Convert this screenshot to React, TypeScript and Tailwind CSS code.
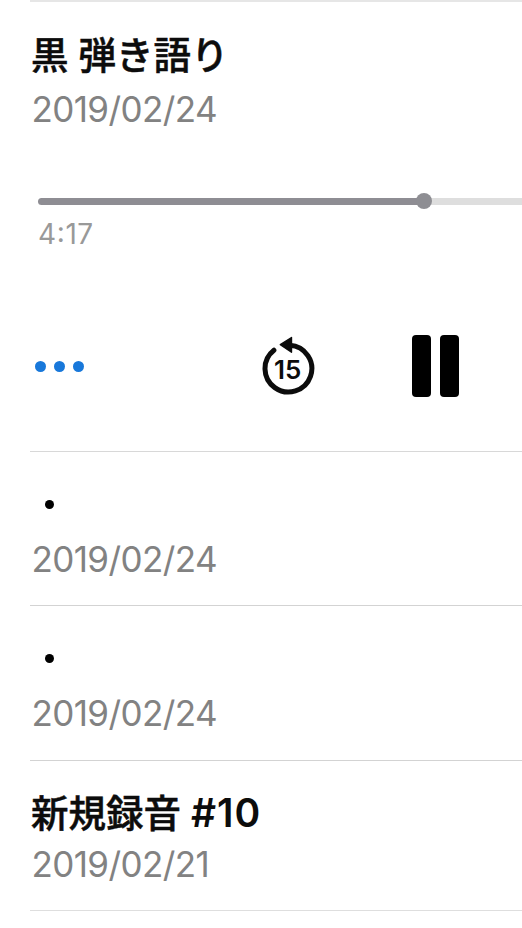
function RecordingDate({ value }: { value: string }) {
  return (
    <div className="ml-[1.5px] flex h-[42px] items-center whitespace-nowrap text-[35px] leading-[42px] tracking-[-0.6px] text-[#828282]">
      {value}
    </div>
  );
}

function RecordingTitle({ name, suffix }: { name: string; suffix?: string }) {
  return (
    <div className="ml-[1px] flex h-[50px] items-baseline whitespace-pre text-[37.5px] font-medium leading-[50px] text-[#0c0c0c]">
      <span className="[-webkit-text-stroke:0.5px_#0c0c0c]">{name}</span>
      {suffix && <span className="ml-[10px] text-[39px] font-semibold tracking-[0.9px]">{suffix}</span>}
    </div>
  );
}

function ScrubBar() {
  return (
    <div className="ml-2 flex h-4 items-center">
      <div className="-mr-[2px] h-[7px] w-[380px] rounded-l-full bg-[#8e8d93]" />
      <div className="z-10 size-4 shrink-0 rounded-full bg-[#8e8e93]" />
      <div className="-ml-[1px] h-[7px] flex-1 bg-[#dedede]" />
    </div>
  );
}

function BackFifteen() {
  return (
    <svg className="ml-[174px] h-[62px] w-[58px]" viewBox="0 0 58 62" role="img" aria-label="15">
      <path d="M15.9 15.2 A23.4 23.4 0 1 0 31.7 10.2" fill="none" stroke="#0c0c0c" strokeWidth="5" strokeLinecap="round" />
      <path d="M22.3 9.7 33.5 2.5V17.2Z" fill="#0c0c0c" stroke="#0c0c0c" strokeWidth="1.4" strokeLinejoin="round" />
      <text x="29.7" y="43.5" textAnchor="middle" fontSize="26" fontWeight="600" fill="#0c0c0c">
        15
      </text>
    </svg>
  );
}

function DotRow() {
  return (
    <section className="flex h-[154.5px] flex-col border-b border-[#d3d3d3] pt-[48px]">
      <div className="ml-[15px] size-[9px] rounded-full bg-black" />
      <div className="pt-[29px]">
        <RecordingDate value="2019/02/24" />
      </div>
    </section>
  );
}

export default function App() {
  return (
    <main
      lang="ja"
      className="h-[928px] w-[522px] overflow-hidden bg-white pl-[30px] font-['Inter','Noto_Sans_CJK_JP',sans-serif]"
    >
      <section className="flex h-[451.5px] flex-col border-t-2 border-b border-t-[#e6e6e6] border-b-[#d8d8d8]">
        <div className="pt-[29px]">
          <RecordingTitle name="黒 弾き語り" />
        </div>
        <div className="pt-[7px]">
          <RecordingDate value="2019/02/24" />
        </div>
        <div className="pt-[63px]">
          <ScrubBar />
        </div>
        <div className="ml-[8px] mt-[8px] h-[34px] text-[28px] leading-[34px] tracking-[0.2px] text-[#999]">
          4<span className="relative -top-[2px] mx-[0.5px]">:</span>17
        </div>
        <div className="mt-[84px] flex h-[62px] items-center">
          <div className="ml-[5px] flex gap-2">
            <span className="size-[11px] rounded-full bg-[#1878da]" />
            <span className="size-[11px] rounded-full bg-[#1878da]" />
            <span className="size-[11px] rounded-full bg-[#1878da]" />
          </div>
          <BackFifteen />
          <div className="ml-[96px] flex gap-[9px]">
            <span className="h-[62px] w-[19px] rounded-[4px] bg-black" />
            <span className="h-[62px] w-[19px] rounded-[4px] bg-black" />
          </div>
        </div>
      </section>
      <DotRow />
      <DotRow />
      <section className="h-[150.5px] border-b border-[#dedede] pt-[27px]">
        <RecordingTitle name="新規録音" suffix="#10" />
        <div className="pt-[5px]">
          <RecordingDate value="2019/02/21" />
        </div>
      </section>
    </main>
  );
}
